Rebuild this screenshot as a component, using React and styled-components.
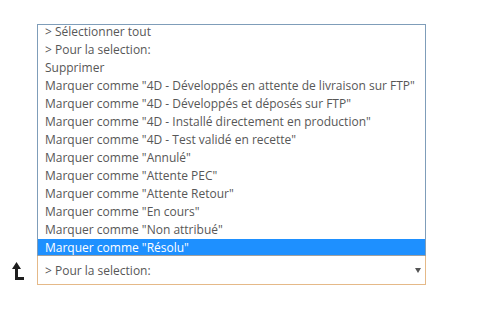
import React from "react";
import styled, { createGlobalStyle } from "styled-components";

const Global = createGlobalStyle`
  html, body { margin: 0; padding: 0; background: #fff; }
  body { font-family: "Open Sans", "Noto Sans", sans-serif; }
`;

const Page = styled.div`
  display: flex;
  align-items: flex-end;
  padding: 24px 0 0 8px;
`;

const IconCell = styled.div`
  width: 29px;
  height: 29px;
  display: flex;
  align-items: center;
  padding-left: 4px;
  box-sizing: border-box;
`;

const Column = styled.div`
  width: 389px;
  display: flex;
  flex-direction: column;
`;

const ListBox = styled.ul`
  list-style: none;
  margin: 0;
  padding: 0;
  height: 230px;
  overflow: hidden;
  border: 1px solid #7f9db9;
  border-bottom: 1px solid #a0a0a0;
`;

const Option = styled.li`
  height: 18px;
  line-height: 18px;
  padding-left: 7px;
  font-size: 12px;
  white-space: nowrap;
  color: ${(p) => (p.$active ? "#fff" : "#575757")};
  background: ${(p) => (p.$active ? "#1e90ff" : "transparent")};
  &:first-child { margin-top: -2px; }
`;

const SelectBox = styled.div`
  height: 29px;
  box-sizing: border-box;
  border: 1px solid #e5b988;
  border-top: none;
  display: flex;
  align-items: center;
  justify-content: space-between;
  padding: 0 4px 0 7px;
  font-size: 12px;
  color: #575757;
`;

const Caret = styled.span`
  width: 0;
  height: 0;
  margin-top: 1px;
  border-left: 3px solid transparent;
  border-right: 3px solid transparent;
  border-top: 5px solid #555;
`;

const options = [
  "> Sélectionner tout",
  "> Pour la selection:",
  "Supprimer",
  'Marquer comme "4D - Développés en attente de livraison sur FTP"',
  'Marquer comme "4D - Développés et déposés sur FTP"',
  'Marquer comme "4D - Installé directement en production"',
  'Marquer comme "4D - Test validé en recette"',
  'Marquer comme "Annulé"',
  'Marquer comme "Attente PEC"',
  'Marquer comme "Attente Retour"',
  'Marquer comme "En cours"',
  'Marquer comme "Non attribué"',
  'Marquer comme "Résolu"',
];

export default function App() {
  return (
    <>
      <Global />
      <Page>
        <IconCell>
          <svg width="12" height="18" viewBox="0 0 12 18">
            <path d="M4.5 0 L9 7 L6 7 L6 15 L12 15 L12 18 L3 18 L3 7 L0 7 Z" fill="#1e1e1e" />
          </svg>
        </IconCell>
        <Column>
          <ListBox>
            {options.map((o, i) => (
              <Option key={i} $active={i === options.length - 1}>
                {o}
              </Option>
            ))}
          </ListBox>
          <SelectBox>
            <span>&gt; Pour la selection:</span>
            <Caret />
          </SelectBox>
        </Column>
      </Page>
    </>
  );
}
